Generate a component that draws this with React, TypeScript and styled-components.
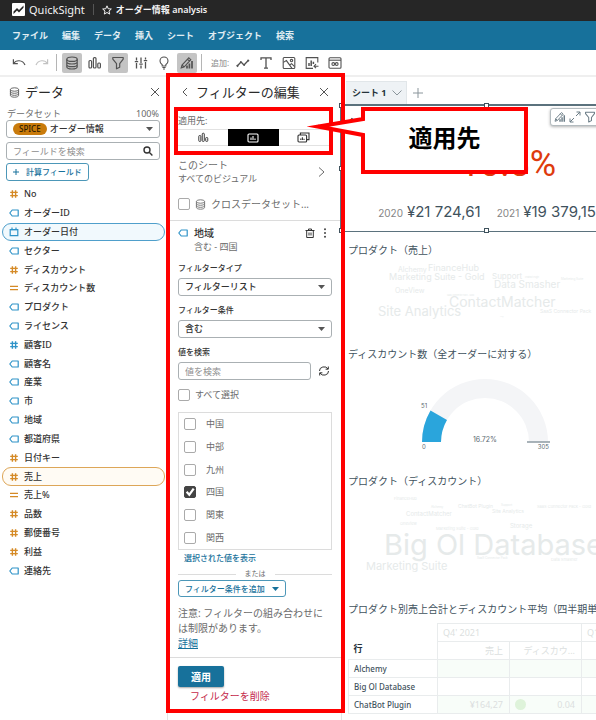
import React from "react";
import styled, { createGlobalStyle, css } from "styled-components";

const sans = `"Noto Sans", "Noto Sans CJK JP", sans-serif`;
const chartFont = `Inter, "Noto Sans CJK JP", sans-serif`;
const color = {
  blue: "#17719b",
  sky: "#2f93c8",
  orange: "#d58a26",
  red: "#ff0000",
  text: "#333333",
  muted: "#6b6b6b",
  line: "#e3e5e6",
  field: "#aab0b3",
  slate: "#3f525d",
  faint: "#e6eaea",
};

const Global = createGlobalStyle`
  *, *::before, *::after { box-sizing: border-box; }
  body { margin: 0; background: #fff; }
  button, input, select { font: inherit; color: inherit; margin: 0; }
  button { background: none; border: 0; padding: 0; cursor: pointer; }
  svg { display: block; flex: none; }
`;

const Page = styled.div`
  display: flex;
  flex-direction: column;
  height: 100vh;
  overflow: hidden;
  font: 9px/14px ${sans};
  color: ${color.text};
`;

/* ---------- top bars ---------- */
const TitleBar = styled.header`
  display: flex;
  align-items: center;
  flex: none;
  height: 21px;
  padding: 0 12px 2px;
  gap: 4px;
  background: #262626;
  color: #f4f4f4;
`;
const Brand = styled.span`
  font-size: 11px;
`;
const BrandRule = styled.span`
  width: 1px;
  height: 11px;
  margin: 0 4px;
  background: #555;
`;
const DocName = styled.h1`
  margin: 0;
  font-size: 9px;
  font-weight: 600;
`;
const MenuBar = styled.nav`
  display: flex;
  align-items: center;
  flex: none;
  gap: 14px;
  height: 29px;
  padding: 0 12px;
  background: ${color.blue};
  color: #e0edf3;
`;
const MenuItem = styled.button`
  font-weight: 700;
  white-space: nowrap;
`;
const Toolbar = styled.div`
  display: flex;
  align-items: center;
  flex: none;
  gap: 3px;
  height: 27px;
  padding: 0 9px;
  border-bottom: 2px solid #efefef;
  color: #525252;
`;
const ToolButton = styled.button<{ $on?: boolean; $dim?: boolean }>`
  display: grid;
  place-items: center;
  width: 20px;
  height: 20px;
  border-radius: 2px;
  background: ${(p) => (p.$on ? "#c4c4c4" : "transparent")};
  opacity: ${(p) => (p.$dim ? 0.35 : 1)};
`;
const ToolRule = styled.span`
  width: 1px;
  height: 17px;
  margin: 0 2px 0 1px;
  background: #b5b5b5;
`;
const ToolLabel = styled.span`
  padding: 0 1px 0 4px;
  font-size: 8px;
  color: #888;
`;

/* ---------- shared parts ---------- */
const Main = styled.main`
  display: flex;
  flex: 1;
  min-height: 0;
`;
const PanelHead = styled.div`
  display: flex;
  align-items: center;
  gap: 5px;
  height: 30px;
  padding-left: 3px;
  color: #555;
`;
const PanelTitle = styled.h2`
  flex: 1;
  margin: 0;
  font-size: 13px;
  font-weight: 400;
  line-height: 18px;
  color: #2b2b2b;
  white-space: nowrap;
`;
const FieldBox = styled.div`
  display: flex;
  align-items: center;
  height: 18px;
  padding: 0 6px;
  border: 1px solid ${color.field};
  border-radius: 3px;
`;
const BareSelect = styled.select`
  flex: 1;
  min-width: 0;
  height: 16px;
  padding: 0;
  border: 0;
  outline: 0;
  appearance: none;
  background: none;
  line-height: 14px;
  font-weight: 500;
`;
const BareInput = styled.input`
  flex: 1;
  min-width: 0;
  height: 16px;
  padding: 0;
  border: 0;
  outline: 0;
  background: none;
  &::placeholder {
    color: #8e8e8e;
    opacity: 1;
  }
`;
const Check = styled.input.attrs({ type: "checkbox" })`
  flex: none;
  display: grid;
  width: 12px;
  height: 12px;
  appearance: none;
  border: 1px solid #aaa;
  border-radius: 2px;
  background: #fff;
  &:checked {
    border-color: #444;
    background: #444;
  }
  &:checked::after {
    content: "";
    background: #fff;
    clip-path: polygon(8% 52%, 24% 38%, 42% 58%, 78% 8%, 96% 20%, 44% 92%);
  }
`;

/* ---------- data panel ---------- */
const DataPanel = styled.aside`
  flex: none;
  width: 168px;
  border-right: 1px solid ${color.line};
`;
const DataTop = styled.div`
  padding: 0 7px 0 6px;
`;
const DatasetLine = styled.div`
  display: flex;
  justify-content: space-between;
  padding: 0 1px;
  line-height: 13px;
  color: ${color.muted};
`;
const Spice = styled.span`
  margin-right: 3px;
  padding: 0 6px;
  border-radius: 6px;
  background: #c97b0c;
  color: #2b1c00;
  font-size: 8px;
  font-weight: 500;
  line-height: 12px;
`;
const SearchBox = styled(FieldBox)`
  margin: 4px 0 3px;
`;
const OutlineButton = styled.button<{ $height: number }>`
  display: flex;
  align-items: center;
  gap: 7px;
  height: ${(p) => p.$height}px;
  padding: 0 6px;
  border: 1px solid #4c97b8;
  border-radius: 3px;
  color: ${color.blue};
  font-size: 8px;
  font-weight: 500;
  white-space: nowrap;
`;
const FieldList = styled.ul`
  display: grid;
  grid-auto-rows: 1fr;
  height: 395px;
  margin: 4px 2px 0;
  padding: 0;
  list-style: none;
`;
const FieldRow = styled.li<{ $pick?: "dimension" | "measure" }>`
  display: flex;
  align-items: center;
  gap: 5px;
  padding: 0 6px;
  border: 1px solid transparent;
  border-radius: 9px;
  font-weight: 500;
  white-space: nowrap;
  ${(p) => p.$pick === "dimension" && css`border-color: #4f9fcb; background: #f1f9fd;`}
  ${(p) => p.$pick === "measure" && css`border-color: #dda658; background: #fffbf4;`}
`;

/* ---------- filter panel ---------- */
const FilterPanel = styled.aside`
  flex: none;
  width: 174px;
  border-right: 1px solid ${color.line};
`;
const FilterBody = styled.div`
  position: relative;
  padding-bottom: 6px;
`;
const RedFrame = styled.div`
  position: absolute;
  inset: -4px -4px -4px -2px;
  z-index: 3;
  border: 4px solid ${color.red};
  pointer-events: none;
`;
const FilterHead = styled(PanelHead)`
  gap: 8px;
  padding: 0 12px 0 14px;
`;
const ScopeBox = styled.div`
  position: relative;
  margin: 0 8px 0 6px;
  padding: 2px 0 5px;
  border: 4px solid ${color.red};
  color: ${color.muted};
  line-height: 16px;
`;
const Segments = styled.div`
  display: grid;
  grid-template-columns: repeat(3, 1fr);
  height: 17px;
  border: 1px solid #e2e2e2;
  border-width: 1px 0;
`;
const Segment = styled.button<{ $on?: boolean }>`
  display: grid;
  place-items: center;
  margin: -1px 0;
  color: ${(p) => (p.$on ? "#fff" : "#333")};
  background: ${(p) => (p.$on ? "#000" : "transparent")};
`;
const Callout = styled.div`
  position: absolute;
  top: -6px;
  left: 128px;
  z-index: 5;
  display: grid;
  place-items: center;
  width: 224px;
  height: 71px;
  padding: 0 4px 6px 57px;
  color: #000;
  font-size: 24px;
  font-weight: 700;
  line-height: 32px;
`;
const CalloutShape = styled.svg`
  position: absolute;
  inset: 0;
  z-index: -1;
`;
const Section = styled.section`
  padding: 0 9px 0 10px;
  border-bottom: 1px solid #dcdcdc;
`;
const SheetScope = styled.button`
  display: flex;
  align-items: center;
  justify-content: space-between;
  width: 100%;
  margin-top: 3px;
  padding-right: 7px;
  color: ${color.muted};
  text-align: left;
`;
const ScopeName = styled.span`
  display: block;
  font-size: 10px;
`;
const CheckLine = styled.label<{ $top: number; $bottom?: number }>`
  display: flex;
  align-items: center;
  gap: 5px;
  margin: ${(p) => p.$top}px 0 ${(p) => p.$bottom ?? 0}px;
  color: ${color.muted};
  white-space: nowrap;
`;
const CrossName = styled.span`
  font-size: 10px;
`;
const FilterName = styled.div`
  display: grid;
  grid-template-columns: 10px 1fr auto auto;
  align-items: center;
  column-gap: 6px;
  padding: 5px 5px 0 0;
`;
const FilterTitle = styled.h3`
  margin: 0;
  font-size: 10px;
  font-weight: 500;
  line-height: 14px;
`;
const TrashButton = styled.button`
  margin-right: 2px;
`;
const FilterSub = styled.span`
  grid-column: 2;
  color: ${color.muted};
`;
const FormLabel = styled.label`
  display: block;
  margin: 7px 0 3px;
  font-size: 8px;
  font-weight: 500;
`;
const SearchLine = styled.div`
  display: grid;
  grid-template-columns: minmax(0, 1fr) 12px;
  align-items: center;
  gap: 7px;
  padding-right: 2px;
`;
const ValueList = styled.ul`
  display: grid;
  grid-auto-rows: 1fr;
  height: 138px;
  margin: 10px 0 1px;
  padding: 0 5px;
  border: 1px solid #dcdcdc;
  list-style: none;
`;
const ValueLabel = styled.label`
  display: flex;
  align-items: center;
  gap: 10px;
  height: 100%;
  color: ${color.muted};
`;
const TextLink = styled.a`
  display: block;
  padding-left: 6px;
  color: ${color.blue};
  font-size: 8px;
  font-weight: 500;
  text-decoration: none;
`;
const OrLine = styled.div`
  display: flex;
  align-items: center;
  gap: 9px;
  margin-top: 3px;
  color: ${color.muted};
  font-size: 7px;
  line-height: 12px;
  &::before,
  &::after {
    content: "";
    flex: 1;
    height: 1px;
    background: #dcdcdc;
  }
`;
const Note = styled.p`
  margin: 9px 0 6px;
  color: ${color.muted};
  font-size: 10px;
  line-height: 15px;
  a {
    display: block;
    width: fit-content;
    color: ${color.blue};
  }
`;
const Actions = styled.div`
  padding: 8px 10px 0;
`;
const Primary = styled.button`
  display: block;
  width: 46px;
  height: 21px;
  border-radius: 2px;
  background: ${color.blue};
  box-shadow: 0 1px 2px rgba(0, 0, 0, 0.35);
  color: #fff;
  font-size: 10px;
  font-weight: 700;
`;
const Danger = styled.button`
  display: block;
  margin: 2px 12px 0;
  color: #c4294a;
  font-size: 10px;
  white-space: nowrap;
`;

/* ---------- sheet ---------- */
const Canvas = styled.div`
  flex: 1;
  min-width: 0;
  color: ${color.slate};
`;
const Tabs = styled.div`
  display: flex;
  align-items: center;
  gap: 6px;
  height: 27px;
  padding: 4px 4px 0;
  color: #8a959b;
`;
const Tab = styled.button`
  display: flex;
  align-items: center;
  gap: 5px;
  height: 23px;
  padding: 0 4px 0 6px;
  border: 1px solid #e1e6e9;
  border-width: 1px 1px 0 0;
  background: #eef2f5;
  b {
    color: #25323a;
    font-weight: 700;
  }
`;
const Sheet = styled.div`
  width: 100%;
  min-width: 290px;
`;
const Title = styled.h3`
  margin: 0;
  font-size: 10px;
  font-weight: 400;
  line-height: 14px;
  white-space: nowrap;
`;
const Kpi = styled.section`
  position: relative;
  z-index: 1;
  height: 128px;
  margin-left: -2px;
  padding: 10px 6px 0 7px;
  border: solid #5b727d;
  border-width: 2px 1px 1px 2px;
  ${Title} {
    color: #25323a;
    font-weight: 600;
  }
`;
const Handle = styled.i<{ $x: string; $y: string }>`
  position: absolute;
  left: ${(p) => p.$x};
  top: ${(p) => p.$y};
  width: 5px;
  height: 5px;
  margin: -3px;
  border: 1px solid #3f525d;
  background: #fff;
`;
const KpiChange = styled.div`
  margin-top: 12px;
  padding-left: 32px;
  color: #de3b0d;
  font: 36px/44px Roboto, sans-serif;
  text-align: center;
`;
const KpiValues = styled.div`
  display: flex;
  justify-content: center;
  gap: 16px;
  margin-top: 16px;
  font: 15px/20px ${chartFont};
  white-space: nowrap;
  small {
    margin-right: 4px;
    color: #858585;
    font-size: 10px;
  }
`;
const VisualTools = styled.div`
  position: absolute;
  top: 2px;
  left: 208px;
  display: flex;
  align-items: center;
  gap: 3px;
  height: 18px;
  padding: 0 3px;
  border: 1px solid #b4bcc0;
  border-radius: 3px;
  background: #fff;
  box-shadow: 0 1px 3px rgba(0, 0, 0, 0.3);
  color: #6b7c86;
`;
const Visual = styled.section<{ $top?: number }>`
  padding-top: ${(p) => p.$top ?? 0}px;
  ${Title} {
    padding-left: 6px;
  }
`;
const CloudText = styled.text`
  fill: ${color.faint};
  font-family: ${chartFont};
`;
const GaugeText = styled.text`
  fill: #5a6870;
  font-family: ${chartFont};
`;
const Pivot = styled.table`
  width: 378px;
  margin: 7px 0 0 6px;
  table-layout: fixed;
  border-collapse: collapse;
  line-height: 12px;
  color: #dcdfe0;
  th,
  td {
    height: 18px;
    padding: 0 6px 0 5px;
    border: 1px solid #e9eced;
    font-weight: 400;
    text-align: right;
    white-space: nowrap;
  }
`;
const QuarterCell = styled.th`
  && {
    text-align: left;
  }
`;
const CornerCell = styled.th`
  && {
    padding-bottom: 4px;
    border-width: 0 0 1px;
    color: #25323a;
    font-weight: 600;
    text-align: left;
    vertical-align: bottom;
  }
`;
const RowName = styled.th`
  && {
    color: ${color.slate};
    font-size: 8px;
    font-weight: 500;
    text-align: left;
  }
`;
const ValueCell = styled.td<{ $tint?: boolean }>`
  background: ${(p) => (p.$tint ? "#f8fdf9" : "transparent")};
`;
const DotValue = styled.span`
  display: flex;
  align-items: center;
  justify-content: space-between;
  &::before {
    content: "";
    width: 11px;
    height: 11px;
    border-radius: 50%;
    background: #def3da;
  }
`;

/* ---------- icons ---------- */
type IconProps = { w?: number; h?: number; box?: string; sw?: number; children: React.ReactNode };
const Icon = ({ w = 14, h, box = "0 0 14 14", sw = 1, children }: IconProps) => (
  <svg width={w} height={h ?? w} viewBox={box} fill="none" stroke="currentColor" strokeWidth={sw} aria-hidden="true">
    {children}
  </svg>
);
const Database = ({ size = 14 }: { size?: number }) => (
  <Icon w={size} sw={size > 12 ? 1.2 : 1.1}>
    <ellipse cx="7" cy="3.2" rx="5.2" ry="2.2" />
    <path d="M1.8 3.2v7.6c0 1.2 2.3 2.2 5.2 2.2s5.2-1 5.2-2.2V3.2M1.8 5.8C1.8 7 4.1 8 7 8s5.2-1 5.2-2.2M1.8 8.4c0 1.2 2.3 2.2 5.2 2.2s5.2-1 5.2-2.2" />
  </Icon>
);
const Cross = () => (
  <Icon w={10} box="0 0 10 10">
    <path d="M1 1l8 8M9 1L1 9" />
  </Icon>
);
const Caret = ({ tone = "#555" }: { tone?: string }) => (
  <Icon w={7} h={4} box="0 0 7 4" sw={0}>
    <path d="M0 0h7L3.5 4z" fill={tone} />
  </Icon>
);
const Bars = ({ size = 14 }: { size?: number }) => (
  <Icon w={size} sw={1.2}>
    <rect x="1" y="4.5" width="2.6" height="7.5" rx="1" />
    <rect x="5.4" y="1.6" width="2.6" height="10.4" rx="1" />
    <rect x="9.8" y="7" width="2.6" height="5" rx="1" />
  </Icon>
);
const Funnel = ({ size = 14 }: { size?: number }) => (
  <Icon w={size} sw={1.2}>
    <path d="M1.8 1.5h10.4v1.6L8.7 7.6v3.6l-3.2 1.6V7.6L1.8 3.1z" strokeLinejoin="round" />
  </Icon>
);
const PencilChart = ({ size = 14 }: { size?: number }) => (
  <Icon w={size} sw={1.1}>
    <path d="M1.2 12l.8-3L8.8 1.8l2 1.9L4 11zM2 9l2 2M7.4 3.2l2 2" />
    <path d="M7 12.6V9.6M9.4 12.6V7.4M12 12.6V5" strokeWidth="1.7" />
  </Icon>
);
const Tag = () => (
  <Icon w={10} box="0 0 10 10" sw={1.2}>
    <path d="M3.2 2H9.2v6H3.2L.8 5z" strokeLinejoin="round" stroke={color.sky} />
  </Icon>
);
const Hash = ({ tone }: { tone: string }) => (
  <Icon w={10} box="0 0 10 10" sw={1.4}>
    <path d="M3.4 1.2v7.6M6.6 1.2v7.6M1.2 3.4h7.6M1.2 6.6h7.6" stroke={tone} />
  </Icon>
);
const Equal = () => (
  <Icon w={10} box="0 0 10 10" sw={1.2}>
    <path d="M1 3.3h8M1 6.7h8" stroke={color.orange} />
  </Icon>
);
const Calendar = () => (
  <Icon w={10} box="0 0 10 10" sw={1.2}>
    <path d="M1.2 2.6h7.6v6H1.2zM3 .6v3M5 2v1.5M7 .6v3" stroke={color.sky} />
  </Icon>
);
const SheetIcon = () => (
  <Icon w={12} h={10} box="0 0 12 10" sw={1.1}>
    <rect x="1" y="1" width="10" height="8" rx="1" />
    <path d="M4 7V4.6M6 7V3M8 7V5.4" />
  </Icon>
);
const SheetsIcon = () => (
  <Icon w={13} h={11} box="0 0 13 11" sw={1.1}>
    <rect x="1" y="3" width="8.6" height="7" rx="1" />
    <path d="M3.4 3V1h8.6v6.6H9.8M3.8 8V6.4M5.4 8V5.2M7 8V6.8" />
  </Icon>
);

/* ---------- data ---------- */
type Kind = "tag" | "num" | "id" | "calc" | "date";
const fields: [Kind, string, ("dimension" | "measure")?][] = [
  ["num", "No"],
  ["tag", "オーダーID"],
  ["date", "オーダー日付", "dimension"],
  ["tag", "セクター"],
  ["num", "ディスカウント"],
  ["calc", "ディスカウント数"],
  ["tag", "プロダクト"],
  ["tag", "ライセンス"],
  ["id", "顧客ID"],
  ["tag", "顧客名"],
  ["tag", "産業"],
  ["tag", "市"],
  ["tag", "地域"],
  ["tag", "都道府県"],
  ["num", "日付キー"],
  ["num", "売上", "measure"],
  ["calc", "売上%"],
  ["num", "品数"],
  ["num", "郵便番号"],
  ["num", "利益"],
  ["tag", "連絡先"],
];
const kindIcon: Record<Kind, React.ReactNode> = {
  tag: <Tag />,
  num: <Hash tone={color.orange} />,
  id: <Hash tone={color.sky} />,
  calc: <Equal />,
  date: <Calendar />,
};
const menus = ["ファイル", "編集", "データ", "挿入", "シート", "オブジェクト", "検索"];
const regions = ["中国", "中部", "九州", "四国", "関東", "関西"];

type Word = [text: string, x: number, y: number, size: number];
const salesWords: Word[] = [
  ["Alchemy", 56, 15, 7],
  ["FinanceHub", 86, 14, 9],
  ["Marketing Suite - Gold", 47, 23, 9],
  ["Support", 150, 22, 8],
  ["ChatBot Plugin", 183, 21, 2],
  ["Marketing Suite", 219, 23, 3],
  ["Data Smasher", 152, 31, 10],
  ["OneView", 53, 36, 7],
  ["SaaS Connector Pack - Gold", 105, 39, 2],
  ["ContactMatcher", 107, 50, 14],
  ["Site Analytics", 36, 59, 13],
  ["SaaS Connector Pack", 198, 56, 5],
  ["Storage", 158, 60, 1],
];
const discountWords: Word[] = [
  ["FinanceHub", 52, 12, 4],
  ["Alchemy", 89, 20, 3],
  ["ChatBot Plugin", 116, 20, 5],
  ["Support", 159, 18, 3],
  ["Site Analytics", 150, 25, 5],
  ["SaaS Connector Pack - Gold", 195, 20, 4],
  ["ContactMatcher", 64, 28, 6],
  ["OneView", 58, 37, 4],
  ["Marketing Suite - Gold", 94, 42, 4],
  ["Storage", 168, 40, 6],
  ["Big Ol Database", 42, 67, 29],
  ["SaaS Connector Pack", 135, 71, 3],
  ["Data Smasher", 209, 73, 4],
  ["Marketing Suite", 24, 82, 11],
];

const WordCloud = ({ words, height, label }: { words: Word[]; height: number; label: string }) => (
  <svg width="290" height={height} viewBox={`0 0 290 ${height}`} role="img" aria-label={label}>
    {words.map(([text, x, y, size]) => (
      <CloudText key={text} x={x} y={y} fontSize={size}>
        {text}
      </CloudText>
    ))}
  </svg>
);

const Gauge = () => (
  <svg width="290" height="113" viewBox="0 0 290 113" role="img" aria-label="16.72%">
    <path d="M80 81A63 63 0 0 1 206 81H187A44 44 0 0 0 99 81Z" fill="#f4f5f7" />
    <path d="M80 81A63 63 0 0 1 88.5 49.5L105 59A44 44 0 0 0 99 81Z" fill="#2aa5dc" />
    <path d="M185 81h23" stroke="#8d9aa2" strokeWidth="1.5" />
    <GaugeText x="79" y="47" fontSize="6">51</GaugeText>
    <GaugeText x="80" y="88" fontSize="6">0</GaugeText>
    <GaugeText x="143" y="81" fontSize="7" textAnchor="middle">16.72%</GaugeText>
    <GaugeText x="207" y="88" fontSize="6" textAnchor="end">305</GaugeText>
  </svg>
);

export default function App() {
  return (
    <Page lang="ja">
      <Global />
      <TitleBar>
        <Icon w={13} box="0 0 13 13" sw={0}>
          <rect width="13" height="13" rx="1" fill="#fff" />
          <path d="M1.5 11V8.4L5 5l2 2 4.5-4.6v2.4L7 9.4l-2-2z" fill="#262626" />
        </Icon>
        <Brand>QuickSight</Brand>
        <BrandRule />
        <Icon w={10} box="0 0 24 24" sw={2.4}>
          <path d="M12 2l3 7 7.4.6-5.6 4.9 1.7 7.3L12 18l-6.5 3.8 1.7-7.3L1.6 9.6 9 9z" />
        </Icon>
        <DocName>オーダー情報 analysis</DocName>
      </TitleBar>
      <MenuBar>
        {menus.map((m) => (
          <MenuItem key={m}>{m}</MenuItem>
        ))}
      </MenuBar>
      <Toolbar>
        <ToolButton aria-label="元に戻す">
          <Icon sw={1.2}>
            <path d="M1.4 3.2v4.4h4.4M1.6 7.4C4 3.8 10.5 3.4 13 9" />
          </Icon>
        </ToolButton>
        <ToolButton $dim aria-label="やり直し">
          <Icon sw={1.2}>
            <path d="M12.6 3.2v4.4H8.2M12.4 7.4C10 3.8 3.5 3.4 1 9" />
          </Icon>
        </ToolButton>
        <ToolRule />
        <ToolButton $on aria-label="データ"><Database /></ToolButton>
        <ToolButton aria-label="ビジュアル"><Bars /></ToolButton>
        <ToolButton $on aria-label="フィルター"><Funnel /></ToolButton>
        <ToolButton aria-label="パラメータ">
          <Icon sw={1.3}>
            <path d="M2.5 1.5v3M2.5 7v5.5M.8 5.7h3.4M7 1.5v5.5M7 9.5v3M5.3 8.2h3.4M11.5 1.5v2M11.5 6v6.5M9.8 4.7h3.4" />
          </Icon>
        </ToolButton>
        <ToolButton aria-label="インサイト">
          <Icon sw={1.1}>
            <path d="M5.2 10V8.8C3.8 7.8 3 6.6 3 5a4 4 0 0 1 8 0c0 1.6-.8 2.8-2.2 3.8V10zM5.4 11.5h3.2M6 13h2" />
          </Icon>
        </ToolButton>
        <ToolButton $on aria-label="プロパティ"><PencilChart /></ToolButton>
        <ToolRule />
        <ToolLabel>追加:</ToolLabel>
        <ToolButton aria-label="ビジュアルを追加">
          <Icon sw={1.3}>
            <path d="M1.5 9.8L5 6l3 3 4.2-4.5" />
            <path d="M.8 10.5l1.2-1.2M4.6 6.4l.8-.8M7.6 9.4l.8-.8M11.8 5l1-1" strokeWidth="2" />
          </Icon>
        </ToolButton>
        <ToolButton aria-label="テキストを追加">
          <Icon sw={1.3}>
            <path d="M2 4V1.8h10V4M7 1.8v10.4M5 12.2h4" />
          </Icon>
        </ToolButton>
        <ToolButton aria-label="画像を追加">
          <Icon sw={1.1}>
            <rect x="1.2" y="1.5" width="11.6" height="11" rx="1" />
            <circle cx="9.5" cy="4.6" r="1.2" />
            <path d="M1.4 6.4l3-1.8L10 12.4M7.6 9l2-1.4 3 3" />
          </Icon>
        </ToolButton>
        <ToolButton aria-label="グラフを挿入">
          <Icon sw={1.1}>
            <path d="M8 12.4H1.2V1.6h11.6v5" />
            <path d="M4 10V7M6.2 10V4.5M8.4 8V5.8" strokeWidth="1.5" />
            <path d="M13.5 10.2H9M11 8.2l-2 2 2 2" />
          </Icon>
        </ToolButton>
        <ToolButton aria-label="埋め込み">
          <Icon sw={1.1}>
            <rect x="1" y="1.8" width="12" height="10.4" rx="1" />
            <path d="M1 4.2h12" />
            <circle cx="5.3" cy="8" r="1.4" />
            <circle cx="8.7" cy="8" r="1.4" />
          </Icon>
        </ToolButton>
      </Toolbar>

      <Main>
        <DataPanel>
          <DataTop>
            <PanelHead>
              <Database size={11} />
              <PanelTitle>データ</PanelTitle>
              <button aria-label="データパネルを閉じる"><Cross /></button>
            </PanelHead>
            <DatasetLine>
              <label htmlFor="dataset">データセット</label>
              <span>100%</span>
            </DatasetLine>
            <FieldBox>
              <Spice>SPICE</Spice>
              <BareSelect id="dataset"><option>オーダー情報</option></BareSelect>
              <Caret />
            </FieldBox>
            <SearchBox>
              <BareInput aria-label="フィールドを検索" placeholder="フィールドを検索" />
              <Icon w={10} box="0 0 10 10" sw={1.4}>
                <circle cx="4" cy="4" r="3" />
                <path d="M6.2 6.2L9.4 9.4" />
              </Icon>
            </SearchBox>
            <OutlineButton $height={18}>
              <Icon w={6} box="0 0 6 6"><path d="M3 0v6M0 3h6" /></Icon>
              計算フィールド
            </OutlineButton>
          </DataTop>
          <FieldList>
            {fields.map(([kind, name, pick]) => (
              <FieldRow key={name} $pick={pick}>
                {kindIcon[kind]}
                {name}
              </FieldRow>
            ))}
          </FieldList>
        </DataPanel>

        <FilterPanel>
          <FilterBody>
            <FilterHead>
              <button aria-label="戻る">
                <Icon w={6} h={10} box="0 0 6 10"><path d="M5 1L1 5l4 4" /></Icon>
              </button>
              <PanelTitle>フィルターの編集</PanelTitle>
              <button aria-label="フィルターパネルを閉じる"><Cross /></button>
            </FilterHead>
            <ScopeBox>
              適用先:
              <Segments>
                <Segment aria-label="ビジュアル"><Bars size={11} /></Segment>
                <Segment $on aria-label="シート"><SheetIcon /></Segment>
                <Segment aria-label="すべてのシート"><SheetsIcon /></Segment>
              </Segments>
              <Callout>
                <CalloutShape width="224" height="71" viewBox="0 0 224 71">
                  <path d="M57 4H220V67H57V30L12 21.5L57 14Z" fill="#fff" stroke={color.red} strokeWidth="4" strokeMiterlimit="12" />
                </CalloutShape>
                適用先
              </Callout>
            </ScopeBox>
            <Section>
              <SheetScope>
                <span>
                  <ScopeName>このシート</ScopeName>
                  すべてのビジュアル
                </span>
                <Icon w={7} h={10} box="0 0 7 10"><path d="M1 .5L6 5 1 9.5" /></Icon>
              </SheetScope>
              <CheckLine $top={11} $bottom={9}>
                <Check />
                <Database size={11} />
                <CrossName>クロスデータセット...</CrossName>
              </CheckLine>
            </Section>
            <Section>
              <FilterName>
                <Tag />
                <FilterTitle>地域</FilterTitle>
                <TrashButton aria-label="削除">
                  <Icon w={10} box="0 0 10 10">
                    <path d="M.5 2.5h9M3.5 2.5V1h3v1.5M1.7 2.5v7h6.6v-7M4 4.5v3M6 4.5v3" />
                  </Icon>
                </TrashButton>
                <button aria-label="その他">
                  <Icon w={4} h={10} box="0 0 4 10" sw={0}>
                    <g fill="#444">
                      <circle cx="2" cy="1.2" r="1" />
                      <circle cx="2" cy="5" r="1" />
                      <circle cx="2" cy="8.8" r="1" />
                    </g>
                  </Icon>
                </button>
                <FilterSub>含む - 四国</FilterSub>
              </FilterName>
              <FormLabel htmlFor="ftype">フィルタータイプ</FormLabel>
              <FieldBox>
                <BareSelect id="ftype"><option>フィルターリスト</option></BareSelect>
                <Caret />
              </FieldBox>
              <FormLabel htmlFor="fcond">フィルター条件</FormLabel>
              <FieldBox>
                <BareSelect id="fcond"><option>含む</option></BareSelect>
                <Caret />
              </FieldBox>
              <FormLabel htmlFor="fsearch">値を検索</FormLabel>
              <SearchLine>
                <FieldBox>
                  <BareInput id="fsearch" placeholder="値を検索" />
                </FieldBox>
                <button aria-label="更新">
                  <Icon w={12} box="0 0 12 12">
                    <path d="M1.5 6A4.5 4 0 0 1 10 4M10.5 6A4.5 4 0 0 1 2 8M10.3 1.5V4.2H7.6M1.7 10.5V7.8h2.7" />
                  </Icon>
                </button>
              </SearchLine>
              <CheckLine $top={8}>
                <Check />
                すべて選択
              </CheckLine>
              <ValueList>
                {regions.map((r) => (
                  <li key={r}>
                    <ValueLabel>
                      <Check defaultChecked={r === "四国"} />
                      {r}
                    </ValueLabel>
                  </li>
                ))}
              </ValueList>
              <TextLink href="#selected">選択された値を表示</TextLink>
              <OrLine>または</OrLine>
              <OutlineButton $height={17}>
                フィルター条件を追加
                <Caret tone={color.blue} />
              </OutlineButton>
              <Note>
                注意: フィルターの組み合わせには制限があります。
                <a href="#details">詳細</a>
              </Note>
            </Section>
            <Actions>
              <Primary>適用</Primary>
              <Danger>フィルターを削除</Danger>
            </Actions>
            <RedFrame />
          </FilterBody>
        </FilterPanel>

        <Canvas>
          <Tabs>
            <Tab>
              <b>シート 1</b>
              <Icon w={10} h={6} box="0 0 10 6"><path d="M.5 .5L5 5 9.5 .5" /></Icon>
            </Tab>
            <button aria-label="シートを追加">
              <Icon w={10} box="0 0 10 10"><path d="M5 0v10M0 5h10" /></Icon>
            </button>
          </Tabs>
          <Sheet>
            <Kpi>
              <Title>年</Title>
              <KpiChange>-10.8%</KpiChange>
              <KpiValues>
                <span><small>2020</small>¥21 724,61</span>
                <span><small>2021</small>¥19 379,15</span>
              </KpiValues>
              <VisualTools>
                <PencilChart size={12} />
                <Icon w={12} box="0 0 12 12">
                  <path d="M7 5l4-4M7.5 1H11v3.5M5 7l-4 4M1 7.5V11h3.5" />
                </Icon>
                <Funnel size={12} />
                <Icon w={12} box="0 0 12 12"><rect x="1" y="1" width="10" height="10" rx="1" /></Icon>
              </VisualTools>
              <Handle $x="0" $y="0" />
              <Handle $x="50%" $y="0" />
              <Handle $x="0" $y="50%" />
              <Handle $x="0" $y="100%" />
              <Handle $x="50%" $y="100%" />
            </Kpi>
            <Visual $top={11}>
              <Title>プロダクト（売上）</Title>
              <WordCloud words={salesWords} height={90} label="プロダクト（売上）" />
            </Visual>
            <Visual>
              <Title>ディスカウント数（全オーダーに対する）</Title>
              <Gauge />
            </Visual>
            <Visual>
              <Title>プロダクト（ディスカウント）</Title>
              <WordCloud words={discountWords} height={114} label="プロダクト（ディスカウント）" />
            </Visual>
            <Visual>
              <Title>プロダクト別売上合計とディスカウント平均（四半期単位）</Title>
              <Pivot>
                <colgroup>
                  <col width="89" />
                  <col />
                  <col />
                  <col />
                  <col />
                </colgroup>
                <thead>
                  <tr>
                    <CornerCell rowSpan={2}>行</CornerCell>
                    <QuarterCell colSpan={2}>Q4' 2021</QuarterCell>
                    <QuarterCell colSpan={2}>Q1' 2022</QuarterCell>
                  </tr>
                  <tr>
                    <th>売上</th>
                    <th>ディスカウ...</th>
                    <th>売上</th>
                    <th>ディスカウ...</th>
                  </tr>
                </thead>
                <tbody>
                  <tr>
                    <RowName>Alchemy</RowName>
                    <ValueCell $tint />
                    <ValueCell $tint />
                    <ValueCell $tint />
                    <ValueCell $tint />
                  </tr>
                  <tr>
                    <RowName>Big Ol Database</RowName>
                    <ValueCell />
                    <ValueCell />
                    <ValueCell />
                    <ValueCell />
                  </tr>
                  <tr>
                    <RowName>ChatBot Plugin</RowName>
                    <ValueCell $tint>¥164,27</ValueCell>
                    <ValueCell $tint><DotValue>0.04</DotValue></ValueCell>
                    <ValueCell $tint />
                    <ValueCell $tint />
                  </tr>
                </tbody>
              </Pivot>
            </Visual>
          </Sheet>
        </Canvas>
      </Main>
    </Page>
  );
}
